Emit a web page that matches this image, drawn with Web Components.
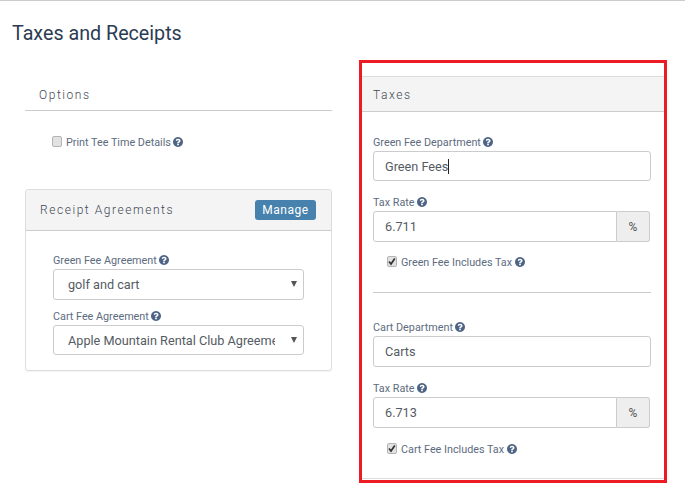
<!DOCTYPE html>
<html>
<head>
<meta charset="utf-8">
<title>Taxes and Receipts</title>
<style>
    html, body { margin: 0; background: #fff; }
    body { font-family: Roboto, "Liberation Sans", sans-serif; color: #5d6c80; }
    .page { width: 685px; height: 493px; overflow: hidden; box-sizing: border-box; border-top: 1px solid #ccc; }
    .columns { display: grid; grid-template-columns: 307px 308px; column-gap: 27px; padding-left: 25px; }
    .stack { display: flex; flex-direction: column; gap: 40px; padding-top: 17px; }
    .separator { border: 0; border-top: 1px solid #ccc; margin: 23px 0 27px; }
    .red-box { border: 3px solid #ed1c24; height: 423px; box-sizing: border-box; padding-top: 13px; }
</style>
</head>
<body>
<div class="page">
    <page-title>Taxes and Receipts</page-title>
    <div class="columns">
        <div class="stack">
            <form-panel heading="Options" plain>
                <check-row style="--indent: 27px" label="Print Tee Time Details"></check-row>
            </form-panel>
            <form-panel heading="Receipt Agreements" framed>
                <action-button slot="action">Manage</action-button>
                <form-field label="Green Fee Agreement" style="margin-bottom: 9px">
                    <select-box value="golf and cart"></select-box>
                </form-field>
                <form-field label="Cart Fee Agreement">
                    <select-box value="Apple Mountain Rental Club Agreement" style="height: 30px"></select-box>
                </form-field>
            </form-panel>
        </div>
        <div class="red-box">
            <form-panel heading="Taxes" tall>
                <form-field label="Green Fee Department">
                    <text-box value="Green Fees" caret style="height: 30px"></text-box>
                </form-field>
                <form-field label="Tax Rate" style="margin-bottom: 13px">
                    <text-box value="6.711" addon="%"></text-box>
                </form-field>
                <check-row label="Green Fee Includes Tax" checked></check-row>
                <hr class="separator">
                <form-field label="Cart Department">
                    <text-box value="Carts"></text-box>
                </form-field>
                <form-field label="Tax Rate">
                    <text-box value="6.713" addon="%" style="height: 31px"></text-box>
                </form-field>
                <check-row label="Cart Fee Includes Tax" checked></check-row>
            </form-panel>
        </div>
    </div>
</div>

<script>
const HELP_ICON = `<svg class="help" viewBox="128 128 1536 1536" width="10" height="10" aria-hidden="true"><path fill="#4d6484" d="M1024 1376v-192q0-14-9-23t-23-9h-192q-14 0-23 9t-9 23v192q0 14 9 23t23 9h192q14 0 23-9t9-23zm256-672q0-88-55.5-163t-138.5-116-170-41q-243 0-371 213-15 24 8 42l132 100q7 6 19 6 16 0 25-12 53-68 86-92 34-24 86-24 48 0 85.5 26t37.5 59q0 38-20 61t-68 45q-63 28-115.5 86.5t-52.5 125.5v36q0 14 9 23t23 9h192q14 0 23-9t9-23q0-19 21.5-49.5t54.5-49.5q32-18 49-28.5t46-35 44.5-48 28-60.5 12.5-81zm384 192q0 209-103 385.5t-279.5 279.5-385.5 103-385.5-103-279.5-279.5-103-385.5 103-385.5 279.5-279.5 385.5-103 385.5 103 279.5 279.5 103 385.5z"/></svg>`;

class PageTitle extends HTMLElement {
    connectedCallback() {
        this.attachShadow({mode: "open"});
        this.shadowRoot.innerHTML = `
            <style>
                :host { display: block; padding: 20px 0 0 12px; height: 39px; font-size: 19.7px; line-height: 26px; color: #2b3c52; }
            </style>
            <slot></slot>
        `;
    }
}

class FormPanel extends HTMLElement {
    connectedCallback() {
        this.attachShadow({mode: "open"});
        this.shadowRoot.innerHTML = `
            <style>
                :host { display: block; box-sizing: border-box; }
                :host([framed]) { border: 1px solid #ddd; border-radius: 3px; height: 182px; box-shadow: 0 1px 1px rgba(0,0,0,.05); }
                :host([tall]) { border-top: 1px solid #ddd; border-bottom: 1px solid #ddd; height: 403px; }
                header {
                    display: flex; align-items: center; justify-content: space-between; box-sizing: border-box;
                    height: 35px; padding: 2px 15px 0 11px; background: #f4f4f4; border-bottom: 1px solid #ccc;
                    font-size: 12px; font-weight: 300; letter-spacing: 1.55px; color: #3f4954;
                }
                :host([framed]) header { height: 41px; padding: 0 15px 0 14px; border-radius: 3px 3px 0 0; }
                :host([plain]) header { background: none; height: 34px; padding: 2px 14px 0; }
                .body { padding: 23px 13px 0 11px; }
                :host([framed]) .body { padding: 22px 27px 0 27px; }
                :host([plain]) .body { padding: 24px 0 0; }
            </style>
            <header>
                <span>${this.getAttribute("heading")}</span>
                <slot name="action"></slot>
            </header>
            <div class="body"><slot></slot></div>
        `;
    }
}

class ActionButton extends HTMLElement {
    connectedCallback() {
        this.attachShadow({mode: "open"});
        this.shadowRoot.innerHTML = `
            <style>
                :host {
                    display: block; box-sizing: border-box; width: 61px; height: 20px; background: #4682ad; color: #fff;
                    border-radius: 3px; font-size: 12px; font-weight: 400; line-height: 20px; letter-spacing: .5px; text-align: center;
                }
            </style>
            <slot></slot>
        `;
    }
}

class FormField extends HTMLElement {
    connectedCallback() {
        this.attachShadow({mode: "open"});
        this.shadowRoot.innerHTML = `
            <style>
                :host { display: block; margin-bottom: 14px; }
                label { display: flex; align-items: center; gap: 2px; height: 14px; margin-bottom: 2px; font-size: 10.8px; color: #5d6c80; }
            </style>
            <label>${this.getAttribute("label")} ${HELP_ICON}</label>
            <slot></slot>
        `;
    }
}

class TextBox extends HTMLElement {
    connectedCallback() {
        const addon = this.getAttribute("addon");
        this.attachShadow({mode: "open"});
        this.shadowRoot.innerHTML = `
            <style>
                :host { display: flex; height: 31px; width: ${addon ? "277px" : "278px"}; }
                .control {
                    flex: 1; min-width: 0; box-sizing: border-box; border: 1px solid #ccc; border-radius: 3px;
                    padding: 0 11px; font-size: 12.7px; color: #555b63; display: flex; align-items: center;
                }
                .control.joined { border-radius: 3px 0 0 3px; }
                .caret { display: inline-block; width: 1px; height: 15px; background: #222; }
                .addon {
                    width: 33px; box-sizing: border-box; border: 1px solid #ccc; border-left: 0; border-radius: 0 3px 3px 0;
                    background: #eee; font-size: 12px; color: #555; display: flex; align-items: center; justify-content: center;
                }
            </style>
            <div class="control ${addon ? "joined" : ""}">${this.getAttribute("value")}${this.hasAttribute("caret") ? '<span class="caret"></span>' : ""}</div>
            ${addon ? `<div class="addon">${addon}</div>` : ""}
        `;
    }
}

class SelectBox extends HTMLElement {
    connectedCallback() {
        this.attachShadow({mode: "open"});
        this.shadowRoot.innerHTML = `
            <style>
                :host { display: block; position: relative; height: 31px; }
                .control {
                    box-sizing: border-box; height: 100%; border: 1px solid #ccc; border-radius: 3px;
                    padding: 0 28px 0 14px; font-size: 12.7px; color: #555b63; display: flex; align-items: center;
                }
                .value { overflow: hidden; white-space: nowrap; }
                .arrow { position: absolute; right: 7px; top: 12px; }
            </style>
            <div class="control"><span class="value">${this.getAttribute("value")}</span></div>
            <svg class="arrow" width="6" height="6" viewBox="0 0 6 6"><path d="M0 0h6L3 6z" fill="#555"/></svg>
        `;
    }
}

class CheckRow extends HTMLElement {
    connectedCallback() {
        const checked = this.hasAttribute("checked");
        this.attachShadow({mode: "open"});
        this.shadowRoot.innerHTML = `
            <style>
                :host { display: flex; align-items: center; height: 14px; padding-left: var(--indent, 14px); font-size: 10.8px; color: #5d6c80; }
                .box {
                    width: 10px; height: 11px; box-sizing: border-box; border: 1px solid #b4b4b4; border-radius: 2px;
                    background: #e2e2e2; margin-right: 4px; position: relative; top: -1px;
                }
                .box svg { display: block; }
                .help { margin-left: 2.5px; }
            </style>
            <span class="box">${checked ? '<svg width="8" height="9" viewBox="0 0 8 9"><path d="M1 4.5 3 7 6.8 1.5" fill="none" stroke="#333" stroke-width="1.7"/></svg>' : ""}</span>
            <span>${this.getAttribute("label")}</span>${HELP_ICON}
        `;
    }
}

customElements.define("page-title", PageTitle);
customElements.define("form-panel", FormPanel);
customElements.define("action-button", ActionButton);
customElements.define("form-field", FormField);
customElements.define("text-box", TextBox);
customElements.define("select-box", SelectBox);
customElements.define("check-row", CheckRow);
</script>
</body>
</html>
